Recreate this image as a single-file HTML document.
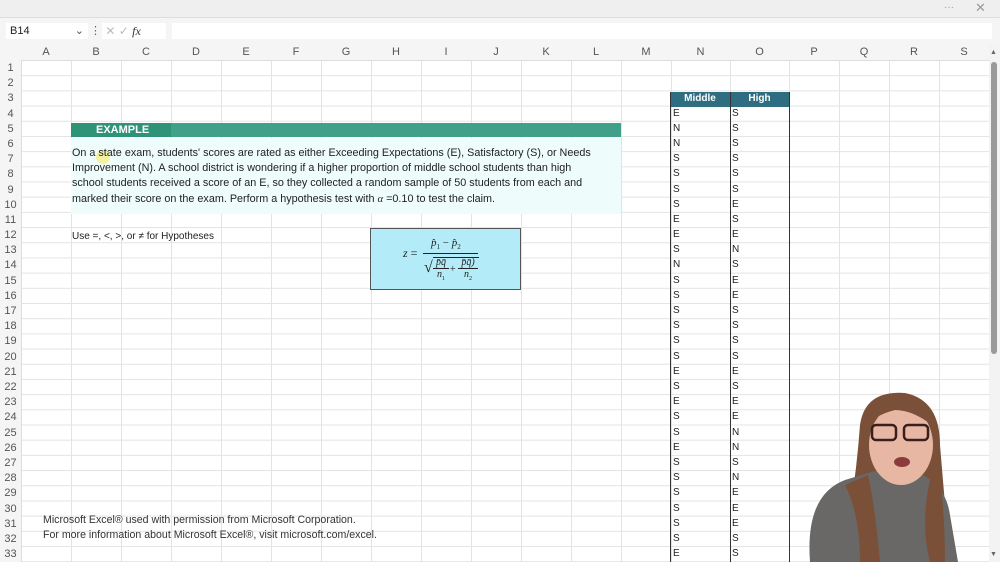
<!DOCTYPE html><html><head><style>
body{margin:0;width:1000px;height:562px;overflow:hidden;background:#fff;font-family:"Liberation Sans",Arial,sans-serif;position:relative}
.a{position:absolute}
.hl{left:21px;top:60px;width:968px;height:502px;background-image:linear-gradient(to bottom,#e3e3e3 1px,transparent 1px);background-size:100% 15.19px}
.vl{top:45px;width:1px;height:517px;background:#e3e3e3}
.ch{top:45px;height:15px;font-size:11px;color:#555;text-align:center;line-height:15px}
.rh{left:0;width:21px;font-size:11px;color:#555;text-align:center;height:15px;line-height:16px}
.c{font-size:10px;color:#222;height:15px;line-height:16px}
</style></head><body>
<div class="a" style="left:0;top:0;width:1000px;height:17px;background:#efefef;border-bottom:1px solid #ddd"></div>
<div class="a" style="left:944px;top:2px;font-size:10px;color:#999">···</div>
<div class="a" style="left:975px;top:0px;font-size:13px;color:#999">✕</div>
<div class="a" style="left:0;top:18px;width:1000px;height:42px;background:#f5f5f5"></div>
<div class="a" style="left:6px;top:23px;width:78px;height:16px;background:#fff;font-size:11px;line-height:16px;padding-left:4px;color:#222">B14<span style="position:absolute;right:4px;color:#555">⌄</span></div>
<div class="a" style="left:90px;top:24px;font-size:11px;color:#666">⋮</div>
<div class="a" style="left:102px;top:23px;width:64px;height:16px;background:#fff;font-size:12px;line-height:16px;color:#bbb">&nbsp;✕ ✓ <i style="color:#333;font-family:'Liberation Serif'">fx</i></div>
<div class="a" style="left:172px;top:23px;width:820px;height:16px;background:#fff"></div>
<div class="hl a"></div>
<div id="vls"></div>
<div class="a" style="left:0;top:45px;width:989px;height:15px;background:#f5f5f5;border-bottom:1px solid #ddd"></div>
<div class="a" style="left:0;top:60px;width:21px;height:502px;background:#f5f5f5;border-right:1px solid #ddd"></div>
<div id="hdr"></div>
<div class="a" style="left:71px;top:123px;width:550px;height:14px;background:#41a08a"></div>
<div class="a" style="left:71px;top:123px;width:100px;height:14px;background:#2f9378"></div>
<div class="a" style="left:96px;top:123px;font-size:11px;font-weight:bold;color:#fff;line-height:15px">EXAMPLE</div>
<div class="a" style="left:71px;top:138px;width:550px;height:76px;background:#eefcfc"></div>
<div class="a" style="left:96px;top:150px;width:14px;height:14px;border-radius:50%;background:#f4ef8a;opacity:.8"></div>
<div class="a" style="left:72px;top:146px;width:520px;font-size:10.8px;line-height:15.2px;color:#222">On a state exam, students' scores are rated as either Exceeding Expectations (E), Satisfactory (S), or Needs Improvement (N). A school district is wondering if a higher proportion of middle school students than high school students received a score of an E, so they collected a random sample of 50 students from each and marked their score on the exam. Perform a hypothesis test with <i style="font-family:'Liberation Serif'">α</i> =0.10 to test the claim.</div>
<div class="a" style="left:72px;top:231px;font-size:10px;color:#222">Use =, &lt;, &gt;, or ≠ for Hypotheses</div>
<div class="a" style="left:370px;top:228px;width:149px;height:60px;background:#b3ecf8;border:1px solid #555;font-family:'Liberation Serif',serif;color:#222">
<div class="a" style="left:32px;top:17px;font-size:12px"><i>z</i> =</div>
<div class="a" style="left:60px;top:8px;font-size:11px"><i>p̂</i><sub style="font-size:7px">1</sub> − <i>p̂</i><sub style="font-size:7px">2</sub></div>
<div class="a" style="left:52px;top:24px;width:55px;border-top:1px solid #222"></div>
<div class="a" style="left:53px;top:30px;font-size:16px">√</div>
<div class="a" style="left:62px;top:28px;width:46px;border-top:1px solid #222"></div>
<div class="a" style="left:62px;top:28px;font-size:10px;text-align:center;width:16px"><i>p̄q̄</i><div style="border-top:1px solid #222"><i>n</i><sub style="font-size:6px">1</sub></div></div>
<div class="a" style="left:79px;top:35px;font-size:10px">+</div>
<div class="a" style="left:87px;top:28px;font-size:10px;text-align:center;width:20px"><i>p̄q̄)</i><div style="border-top:1px solid #222"><i>n</i><sub style="font-size:6px">2</sub></div></div>
</div>
<div class="a" style="left:670px;top:92px;width:119px;height:15px;background:#2e6e80"></div>
<div class="a" style="left:670px;top:93px;width:60px;text-align:center;font-size:10px;font-weight:bold;color:#fff">Middle</div>
<div class="a" style="left:730px;top:93px;width:59px;text-align:center;font-size:10px;font-weight:bold;color:#fff">High</div>
<div class="a" style="left:670px;top:92px;width:0;height:470px;border-left:1px solid #333"></div>
<div class="a" style="left:730px;top:92px;width:0;height:470px;border-left:1px solid #333"></div>
<div class="a" style="left:789px;top:92px;width:0;height:470px;border-left:1px solid #333"></div>
<div id="data"></div>
<div class="a" style="left:43px;top:513px;font-size:10.6px;line-height:15px;color:#333">Microsoft Excel® used with permission from Microsoft Corporation.<br>For more information about Microsoft Excel®, visit microsoft.com/excel.</div>
<div class="a" style="left:989px;top:45px;width:11px;height:517px;background:#f3f3f3"></div>
<div class="a" style="left:991px;top:62px;width:6px;height:292px;background:#9a9a9a;border-radius:3px"></div>
<div class="a" style="left:990px;top:49px;font-size:7px;color:#666">▲</div>
<div class="a" style="left:990px;top:551px;font-size:7px;color:#666">▼</div>
<svg class="a" style="left:800px;top:385px" width="160" height="177">
<path d="M60 40 Q65 5 105 8 Q140 15 140 60 Q145 120 150 177 L40 177 Q55 110 60 40Z" fill="#7a5038"/>
<path d="M10 177 Q5 110 45 95 L78 85 L110 85 Q145 95 150 130 L158 177Z" fill="#6a6866"/>
<ellipse cx="101" cy="60" rx="32" ry="40" fill="#e7b7a3"/>
<path d="M60 45 Q75 10 105 12 Q135 20 138 45 Q115 25 95 25 Q75 30 60 45Z" fill="#7a5038"/>
<rect x="72" y="40" width="24" height="15" rx="4" fill="none" stroke="#3a1f1f" stroke-width="2.5"/>
<rect x="104" y="40" width="24" height="15" rx="4" fill="none" stroke="#3a1f1f" stroke-width="2.5"/>
<ellipse cx="102" cy="77" rx="8" ry="5" fill="#8a3b3b"/>
<path d="M45 100 Q60 130 60 177 L80 177 Q75 120 68 90Z M130 95 Q120 140 130 177 L145 177 Q145 130 140 95Z" fill="#7a5038"/>
</svg>
<script>
var bounds=[71,121,171,221,271,321,371,421,471,521,571,621,671,730,789,839,889,939,989],s='';
bounds.forEach(function(x){s+='<div class="a vl" style="left:'+x+'px"></div>'});
document.getElementById('vls').innerHTML=s;
var h=document.getElementById('hdr');s='';
'ABCDEFGHIJKL'.split('').forEach(function(c,i){s+='<div class="a ch" style="left:'+(21+i*50)+'px;width:50px">'+c+'</div>'});
var cx=[['M',621,50],['N',671,59],['O',730,59],['P',789,50],['Q',839,50],['R',889,50],['S',939,50]];
cx.forEach(function(c){s+='<div class="a ch" style="left:'+c[1]+'px;width:'+c[2]+'px">'+c[0]+'</div>'});
for(var r=1;r<=33;r++)s+='<div class="a rh" style="top:'+(60+(r-1)*15.19)+'px">'+r+'</div>';
h.innerHTML=s;
var m='ENNSSSSEESNSSSSSSESESSESSSSSSE',g='SSSSSSESENSEESSSSESEENNSNEEESS';s='';
for(var i=0;i<30;i++){var t=60+(i+3)*15.19;s+='<div class="a c" style="left:673px;top:'+t+'px">'+m[i]+'</div><div class="a c" style="left:732px;top:'+t+'px">'+g[i]+'</div>'}
document.getElementById('data').innerHTML=s;
</script>
</body></html>
